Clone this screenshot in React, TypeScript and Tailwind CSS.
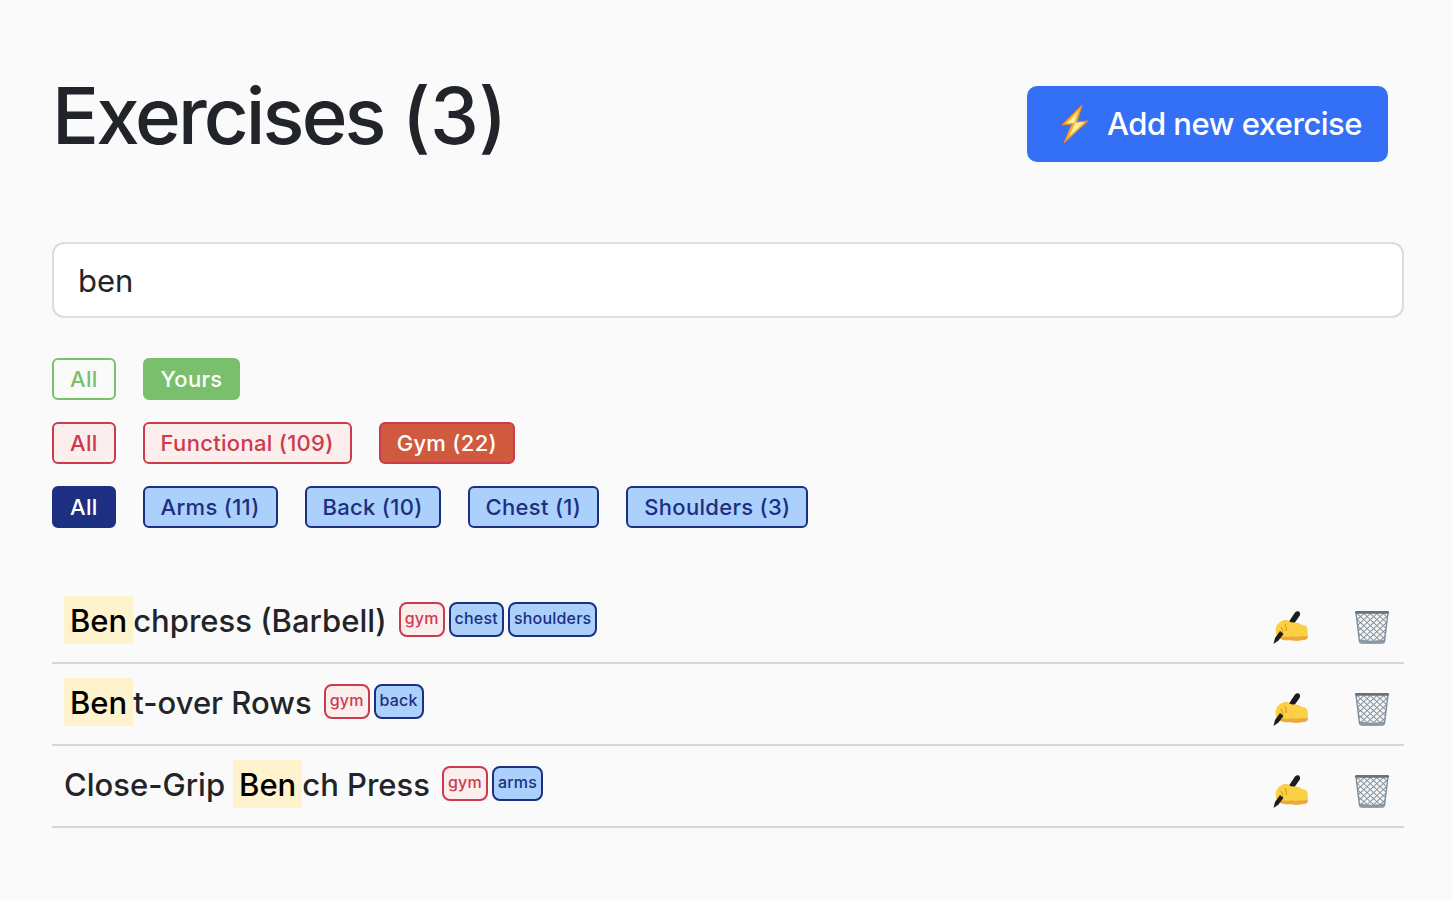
const font = "[font-family:Inter,'Liberation_Sans',sans-serif]";

function Bolt() {
  return (
    <svg width="32" height="40" viewBox="0 0 32 40" className="shrink-0">
      <path d="M23 1 L3 21 L13 20 L5 39 L29 17 L18 18 Z" fill="#f6ae35" stroke="#ea8a2a" strokeWidth="1" strokeLinejoin="round" />
      <path d="M19.5 7 L7.5 19.5 L16.5 18.5 L10.5 32 L25.5 18 L15 19 Z" fill="#fff2a0" />
    </svg>
  );
}

function Writing() {
  return (
    <svg width="38" height="36" viewBox="0 0 38 36">
      {/* pen behind the fingers */}
      <path d="M12 20 L23 3.5 Q25 1.5 27 2.5 Q28.8 4 27.8 6.5 L17 22 Z" fill="#1c1c1e" />
      {/* hand */}
      <path d="M3.5 20 Q5 14 10 12 Q14 9.5 17 12 Q19 14 23 13.5 Q27 13 30 16 Q35 16 35.5 20 L36 27 Q36 31 31 31 Q24 32.5 18 31 Q13 32 9 30 Q5 29 4 25 Z" fill="#fcd045" />
      <path d="M7 29 Q11 26.5 15 28 Q19 26.5 23 28 Q28 27 35.8 27 Q36 31 31 31 Q24 32.5 18 31 Q13 32 9 30 Z" fill="#eaa83f" />
      <path d="M9 18 Q12 21 10 26 M13 15 Q15 19 14 22" stroke="#d98f22" strokeWidth="1" fill="none" />
      {/* pen tip below the hand */}
      <path d="M1.5 35 L3 29 L8 22 L11.5 25 L6.5 31.5 Z" fill="#1c1c1e" />
    </svg>
  );
}

function Trash() {
  return (
    <svg width="36" height="35" viewBox="0 0 36 38" preserveAspectRatio="none">
      <defs>
        <pattern id="mesh" width="4.6" height="4.6" patternUnits="userSpaceOnUse" patternTransform="rotate(45)">
          <rect width="4.6" height="4.6" fill="#f4f6f7" />
          <path d="M0 0H4.6M0 0V4.6" stroke="#7f8c97" strokeWidth="2" />
        </pattern>
      </defs>
      <path d="M2 3 L5.5 34 Q6 36 9 36 L27 36 Q30 36 30.5 34 L34 3 Z" fill="url(#mesh)" />
      <path d="M2 3 L5.5 34 Q6 36 9 36 L27 36 Q30 36 30.5 34 L34 3" fill="none" stroke="#7f8c97" strokeWidth="1.4" />
      <rect x="1" y="1" width="34" height="3" rx="1.5" fill="#66727c" />
      <path d="M5.5 32 Q18 34.5 30.5 32 L30 35 Q18 37.5 6 35 Z" fill="#8b97a1" />
    </svg>
  );
}

const tones = {
  green: "border-[#7abf6b] text-[#7abf6b] bg-transparent",
  greenOn: "border-[#7abf6b] text-white bg-[#7abf6b]",
  red: "border-[#cb3a4d] text-[#cb3a4d] bg-[#fdeeee]",
  redOn: "border-[#cb3a4d] text-white bg-[#d05a3e]",
  blue: "border-[#1c2f80] text-[#1c2f80] bg-[#abd0fc]",
  blueOn: "border-[#1c2f80] text-white bg-[#1c2f80]",
};

type Tone = keyof typeof tones;

function Filter({ label, tone }: { label: string; tone: Tone }) {
  return (
    <span className={`h-[42px] flex items-center px-[16px] border-2 rounded-[6px] text-[22px] font-[450] tracking-[0.3px] ${tones[tone]}`}>
      {label}
    </span>
  );
}

function Tag({ label, tone }: { label: string; tone: Tone }) {
  return (
    <span className={`h-[35px] flex items-center px-[4px] pb-[2px] border-2 rounded-[8px] text-[16px] font-[450] tracking-[0.2px] ${tones[tone]}`}>
      {label}
    </span>
  );
}

function Mark({ children }: { children: string }) {
  return <span className="bg-[#fff3cd] text-black px-[6px] pt-[2px] h-[48px] flex items-center">{children}</span>;
}

function Row({ before, match, after, tags }: { before?: string; match: string; after: string; tags: [string, Tone][] }) {
  return (
    <div className="h-[82px] border-b-2 border-[#d3d7da] flex items-center pl-[12px] pr-[14px]">
      <div className="flex items-center text-[31px] font-medium -mt-[4px]">
        {before && <span className="mr-[8px] pt-[2px]">{before}</span>}
        <Mark>{match}</Mark>
        <span className="pt-[2px]">{after}</span>
      </div>
      <div className="flex gap-[4px] ml-[12px] -mt-[6px]">
        {tags.map(([label, tone]) => (
          <Tag key={label} label={label} tone={tone} />
        ))}
      </div>
      <div className="ml-auto flex items-center gap-[44px] mt-[10px]">
        <Writing />
        <Trash />
      </div>
    </div>
  );
}

export default function App() {
  return (
    <div className={`min-h-[900px] bg-[#fafafa] text-[#212529] pl-[52px] pr-[48px] pt-[72px] ${font}`}>
      <div className="flex items-start justify-between pr-[16px]">
        <h1 className="text-[78px] leading-[88px] font-medium tracking-[-2.9px]">
          Exercises <span className="tracking-[-0.4px]">(3)</span>
        </h1>
        <button className="mt-[14px] h-[76px] w-[361px] bg-[#3370f6] rounded-[10px] text-white text-[31px] font-[450] tracking-[-0.5px] flex items-center pl-[32px] gap-[16px]">
          <Bolt />
          <span className="pt-[1px]">Add new exercise</span>
        </button>
      </div>

      <div className="mt-[80px] h-[76px] bg-white border-2 border-[#dbdee1] rounded-[12px] flex items-center pl-[24px] text-[31px]">
        <span className="pt-[2px]">ben</span>
      </div>

      <div className="mt-[40px] flex flex-col gap-[22px]">
        <div className="flex gap-[27px]">
          <Filter label="All" tone="green" />
          <Filter label="Yours" tone="greenOn" />
        </div>
        <div className="flex gap-[27px]">
          <Filter label="All" tone="red" />
          <Filter label="Functional (109)" tone="red" />
          <Filter label="Gym (22)" tone="redOn" />
        </div>
        <div className="flex gap-[27px]">
          <Filter label="All" tone="blueOn" />
          <Filter label="Arms (11)" tone="blue" />
          <Filter label="Back (10)" tone="blue" />
          <Filter label="Chest (1)" tone="blue" />
          <Filter label="Shoulders (3)" tone="blue" />
        </div>
      </div>

      <div className="mt-[54px]">
        <Row match="Ben" after="chpress (Barbell)" tags={[["gym", "red"], ["chest", "blue"], ["shoulders", "blue"]]} />
        <Row match="Ben" after="t-over Rows" tags={[["gym", "red"], ["back", "blue"]]} />
        <Row before="Close-Grip" match="Ben" after="ch Press" tags={[["gym", "red"], ["arms", "blue"]]} />
      </div>
    </div>
  );
}
